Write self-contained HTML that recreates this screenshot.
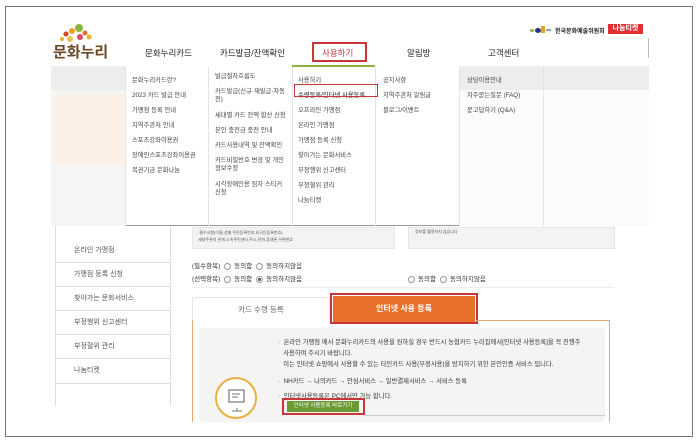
<!DOCTYPE html>
<html><head><meta charset="utf-8"><style>
*{margin:0;padding:0;box-sizing:border-box}
body{width:698px;height:441px;background:#fff;font-family:"Liberation Sans","Noto Sans CJK KR","NanumGothic",sans-serif;position:relative;overflow:hidden;color:#333}
.a{position:absolute;white-space:nowrap}
.frame{left:5px;top:6px;width:688px;height:431px;border:1px solid #777}
.nav{font-size:8.5px;color:#222;top:47px}
.dd{font-size:6.3px;color:#444;line-height:8px}
.col{position:absolute;top:67px;height:159px;border-left:1px solid #e4e4e4}
.side{font-size:7px;color:#555;left:74px}
.sl{position:absolute;left:55px;width:115px;height:1px;background:#ddd}
.rad{display:inline-block;width:7px;height:7px;border:1px solid #999;border-radius:50%;vertical-align:middle;margin:0 3px 0 4px;background:#fff}
</style></head><body>
<div class="a frame"></div>
<svg class="a" style="left:52px;top:22px" width="60" height="40" viewBox="0 0 60 40">
<circle cx="14" cy="12" r="2.5" fill="#d8402f"/><circle cx="20" cy="9" r="3" fill="#f0a020"/><circle cx="27" cy="6" r="4" fill="#8cb43c"/><circle cx="33" cy="11" r="2.5" fill="#e07030"/><circle cx="37" cy="15" r="2.5" fill="#f0b020"/><circle cx="18" cy="17" r="3" fill="#f0c050"/><circle cx="28" cy="15" r="3" fill="#d84a6a"/><circle cx="10" cy="17" r="2" fill="#e8b030"/>
<text x="1" y="35" font-size="15" font-weight="bold" fill="#6b4a2a" font-family="Noto Sans CJK KR,sans-serif">문화누리</text></svg>
<div class="a nav" style="left:145px">문화누리카드</div>
<div class="a nav" style="left:220px">카드발급/잔액확인</div>
<div class="a" style="left:312px;top:42px;width:55px;height:20px;border:2px solid #c8353a"></div>
<div class="a nav" style="left:322px;color:#c8353a">사용하기</div>
<div class="a nav" style="left:407px">알림방</div>
<div class="a nav" style="left:488px">고객센터</div>
<div class="a" style="left:648px;top:38px;width:1px;height:20px;background:#bbb"></div>
<div class="a" style="left:530px;top:29px;width:4px;height:3px;background:#8cb43c;border-radius:50%"></div>
<div class="a" style="left:535px;top:28px;width:6px;height:5px;background:#2a3a7a;border-radius:50%"></div>
<div class="a" style="left:541px;top:26px;width:4px;height:7px;background:#f0a020"></div>
<div class="a" style="left:546px;top:29px;width:5px;height:2px;background:#8aa"></div>
<div class="a" style="left:555px;top:26px;font-size:6px;font-weight:bold;color:#222">한국문화예술위원회</div>
<div class="a" style="left:608px;top:24px;width:35px;height:10px;background:#e03030;color:#fff;font-size:7px;font-weight:bold;text-align:center;line-height:10px">나눔티켓</div>
<div class="a" style="left:51px;top:66px;width:598px;height:160px;background:#fff;border-bottom:1px solid #999"></div>
<div class="a" style="left:51px;top:66px;width:74px;height:160px;background:#f5f5f4"></div>
<div class="a" style="left:56px;top:95px;width:69px;height:70px;background:#fbefe6"></div>
<div class="a" style="left:459px;top:66px;width:190px;height:160px;background:#fbfbfb"></div>
<div class="a" style="left:459px;top:66px;width:190px;height:24px;background:#eceeee"></div>
<div class="a" style="left:51px;top:66px;width:74px;height:24px;background:#eceeee"></div>
<div class="a" style="left:292px;top:65px;width:83px;height:2px;background:#8cb43c"></div>
<div class="col" style="left:125px"></div><div class="col" style="left:208px"></div><div class="col" style="left:292px"></div><div class="col" style="left:375px"></div><div class="col" style="left:459px"></div><div class="col" style="left:543px"></div>
<div class="a dd" style="left:132px;top:73px;line-height:15px">문화누리카드란?<br>2023 카드 발급 안내<br>가맹점 등록 안내<br>지역주관처 안내<br>스포츠강좌이용권<br>장애인스포츠강좌이용권<br>복권기금 문화나눔</div>
<div class="a dd" style="left:215px;top:73px">발급절차흐름도</div>
<div class="a dd" style="left:215px;top:88px">카드발급(신규·재발급·자동<br>전)</div>
<div class="a dd" style="left:215px;top:112px">세대별 카드 잔액 합산 신청</div>
<div class="a dd" style="left:215px;top:127px">본인 충전금 충전 안내</div>
<div class="a dd" style="left:215px;top:142px">카드사용내역 및 잔액확인</div>
<div class="a dd" style="left:215px;top:157px">카드비밀번호 변경 및 개인<br>정보수정</div>
<div class="a dd" style="left:215px;top:181px">시각장애인용 점자 스티커<br>신청</div>
<div class="a dd" style="left:298px;top:73px;line-height:15px">사용하기<br><span style="color:#222">수령등록/인터넷 사용등록</span><br>오프라인 가맹점<br>온라인 가맹점<br>가맹점 등록 신청<br>찾아가는 문화서비스<br>부정행위 신고센터<br>부정혈위 관리<br>나눔티켓</div>
<div class="a" style="left:294px;top:84px;width:84px;height:13px;border:1.5px solid #c8353a"></div>
<div class="a dd" style="left:383px;top:73px;line-height:15px">공지사항<br>지역주관처 알림글<br>블로그/이벤트</div>
<div class="a dd" style="left:467px;top:73px;line-height:15px">상담이용안내<br>자주묻는질문 (FAQ)<br>묻고답하기 (Q&amp;A)</div>
<div class="a" style="left:170px;top:226px;width:1px;height:180px;background:#ddd"></div>
<div class="a" style="left:55px;top:226px;width:1px;height:180px;background:#ddd"></div>
<div class="sl" style="top:262px"></div><div class="sl" style="top:286px"></div><div class="sl" style="top:310px"></div><div class="sl" style="top:334px"></div><div class="sl" style="top:358px"></div><div class="sl" style="top:383px"></div>
<div class="a side" style="top:245px">온라인 가맹점</div>
<div class="a side" style="top:269px">가맹점 등록 신청</div>
<div class="a side" style="top:293px">찾아가는 문화서비스</div>
<div class="a side" style="top:317px">부정행위 신고센터</div>
<div class="a side" style="top:341px">부정혈위 관리</div>
<div class="a side" style="top:365px">나눔티켓</div>
<div class="a" style="left:192px;top:227px;width:203px;height:22px;background:#f3f3f3;border:1px solid #e6e6e6"></div>
<div class="a" style="left:408px;top:227px;width:207px;height:22px;background:#f3f3f3;border:1px solid #e6e6e6"></div>
<div class="a" style="left:198px;top:229px;font-size:4px;color:#555;line-height:7px">-필수사항(이름,성별,주민등록번호,외국인등록번호)<br>세대주관의 관계,소속주민센터,주소,전화,휴대폰,우편번호</div>
<div class="a" style="left:415px;top:229px;font-size:4px;color:#555">정보를 활용하지 않습니다</div>
<div class="a" style="left:192px;top:260px;font-size:6.5px;color:#333">(필수항목)<span class="rad"></span>동의함<span class="rad"></span>동의하지않음</div>
<div class="a" style="left:192px;top:273px;font-size:6.5px;color:#333">(선택항목)<span class="rad"></span>동의함<span class="rad" style="background:radial-gradient(#555 40%,#fff 45%)"></span>동의하지않음</div>
<div class="a" style="left:404px;top:273px;font-size:6.5px;color:#333"><span class="rad"></span>동의함<span class="rad"></span>동의하지않음</div>
<div class="a" style="left:192px;top:287px;width:422px;height:1px;background:#eee"></div>
<div class="a" style="left:192px;top:297px;width:138px;height:24px;border:1px solid #e6e6e6;border-bottom:none;font-size:7.5px;color:#666;text-align:center;line-height:24px">카드 수령 등록</div>
<div class="a" style="left:333px;top:296px;width:142px;height:26px;background:#e8702a;color:#fff;font-size:8px;font-weight:bold;text-align:center;line-height:26px">인터넷 사용 등록</div>
<div class="a" style="left:330px;top:293px;width:148px;height:31px;border:2px solid #c8353a"></div>
<div class="a" style="left:192px;top:320px;width:1px;height:102px;background:#e8a870"></div>
<div class="a" style="left:476px;top:320px;width:134px;height:1px;background:#e8a870"></div>
<div class="a" style="left:609px;top:320px;width:1px;height:102px;background:#e8a870"></div>
<div class="a" style="left:199px;top:328px;width:406px;height:94px;background:#f4f4f3;border-radius:4px"></div>
<div class="a" style="left:215px;top:377px;width:42px;height:42px;border:2px solid #e8b040;border-radius:50%;background:#fff"></div>
<svg class="a" style="left:228px;top:389px" width="18" height="24" viewBox="0 0 18 24"><rect x="1" y="1" width="15" height="12" fill="none" stroke="#777" stroke-width="1.2"/><path d="M4 5h8M4 8h6M9 19v3M4 22h10" stroke="#777" stroke-width="1"/></svg>
<div class="a" style="left:278px;top:337px;font-size:6.3px;color:#333;line-height:11px">·&nbsp;&nbsp;온라인 가맹점 에서 문화누리카드의 사용을 원하실 경우 반드시 농협카드 누리집에서[인터넷 사용등록]을 꼭 진행주<br>&nbsp;&nbsp;&nbsp;사용하여 주시기 바랍니다.<br>&nbsp;&nbsp;&nbsp;이는 인터넷 쇼핑에서 사용할 수 있는 타인카드 사용(부정사용)을 방지하기 위한 본인인증 서비스 입니다.</div>
<div class="a" style="left:278px;top:376px;font-size:6.3px;color:#333">·&nbsp;&nbsp;NH카드 → 나의카드 → 안심서비스 → 일반결제서비스 → 서비스 등록</div>
<div class="a" style="left:278px;top:391px;font-size:6.3px;color:#333">·&nbsp;&nbsp;인터넷사용등록은 PC에서만 가능 합니다.</div>
<div class="a" style="left:287px;top:401px;width:72px;height:11px;background:#6a9a32;color:#fff;font-size:5.5px;text-align:center;line-height:11px">인터넷 사용등록 바로가기</div>
<div class="a" style="left:282px;top:398px;width:83px;height:17px;border:2px solid #c8353a"></div>
<div class="a" style="left:365px;top:415px;width:240px;height:1px;background:#ccc"></div>
</body></html>
